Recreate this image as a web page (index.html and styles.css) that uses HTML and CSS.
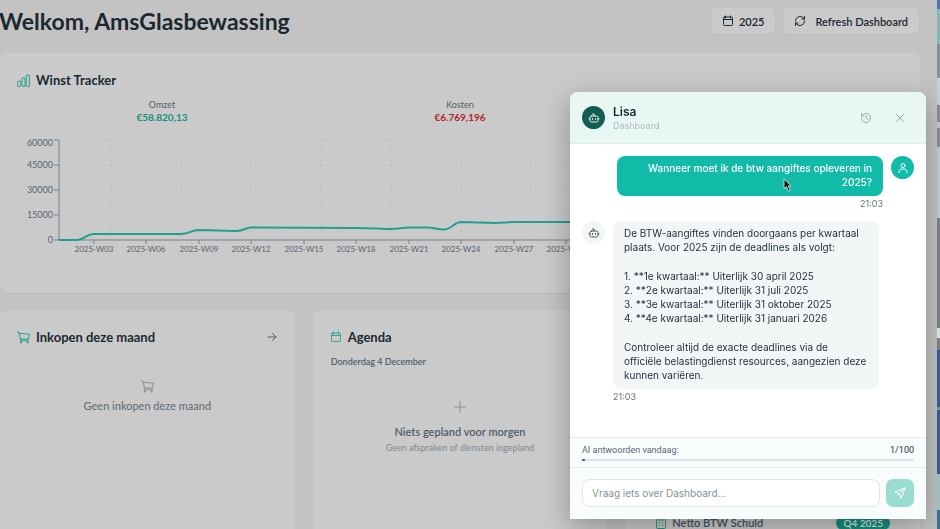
FILE: index.html
```html
<!DOCTYPE html>
<html lang="nl">
<head>
<meta charset="utf-8">
<title>Dashboard</title>
<link rel="stylesheet" href="styles.css">
</head>
<body>
<svg class="sprite" aria-hidden="true">
  <symbol id="calendar" viewBox="0 0 24 24"><path d="M7 2v4M17 2v4M3 9h18M5 4h14a2 2 0 0 1 2 2v13a2 2 0 0 1-2 2H5a2 2 0 0 1-2-2V6a2 2 0 0 1 2-2z"/></symbol>
  <symbol id="refresh" viewBox="0 0 24 24"><path d="M3 12a9 9 0 0 1 15.5-6.3L21 8M21 3v5h-5M21 12a9 9 0 0 1-15.5 6.3L3 16M3 21v-5h5"/></symbol>
  <symbol id="cart" viewBox="0 0 24 24"><path d="M1 2l3 1 3 15h14M4 4l19 2-2 9H6M8 18v3M19 18v3"/><circle cx="7" cy="21" r="1"/><circle cx="20" cy="21" r="1"/></symbol>
  <symbol id="bot" viewBox="0 0 24 24"><path d="M12 8V4H9M2 14h2M20 14h2M9 13v2M15 13v2"/><rect x="4" y="8" width="16" height="12" rx="3"/></symbol>
</svg>
<div class="screen">
  <main class="page">
    <header class="topbar">
      <h1>Welkom, AmsGlasbewassing</h1>
      <div class="actions">
        <button class="btn" type="button"><svg class="icon"><use href="#calendar"/></svg>2025</button>
        <button class="btn btn-wide" type="button"><svg class="icon"><use href="#refresh"/></svg>Refresh Dashboard</button>
      </div>
    </header>

    <section class="card tracker">
      <h2><svg class="icon icon-title" viewBox="0 0 24 24"><rect x="1" y="13" width="6" height="10" rx="3"/><rect x="9" y="7" width="6" height="16" rx="3"/><rect x="17" y="2" width="6" height="21" rx="2"/></svg>Winst Tracker</h2>
      <dl class="stats">
        <div><dt>Omzet</dt><dd class="income">€58.820,13</dd></div>
        <div><dt>Kosten</dt><dd class="costs">€6.769,196</dd></div>
        <div><dt>Winst</dt><dd class="income">€52.050,93</dd></div>
      </dl>
      <svg class="chart" role="img" aria-label="Winst per week">
        <path class="grid" d="M60 6H884M60 31H884M60 56H884M60 81H884M111 6V105M181 6V105M251 6V105M321 6V105M391 6V105M461 6V105M531 6V105"/>
        <path class="axis" d="M54 6H59V106M54 31H59M54 56H59M54 81H59M54 106H884M94 106v4M146 106v4M199 106v4M251 106v4M304 106v4M356 106v4M409 106v4M461 106v4M514 106v4M566 106v4"/>
        <path class="line" d="M59 106H77C84 106 86 100 94 100H181C189 100 191 96 199 96L236 97C243 97 245 94 251 93.500L356 94C370 94 382 95 391 95C398 95 402 93.500 409 93.500H427C434 93.500 437 95.500 444 95.500C452 95.500 454 88 461 88L495 89L513 88H566L600 88.500"/>
        <g class="ylabels"><text x="53" y="12">60000</text><text x="53" y="34">45000</text><text x="53" y="59">30000</text><text x="53" y="84">15000</text><text x="53" y="109">0</text></g>
        <g class="xlabels"><text x="94" y="118">2025-W03</text><text x="146" y="118">2025-W06</text><text x="199" y="118">2025-W09</text><text x="251" y="118">2025-W12</text><text x="304" y="118">2025-W15</text><text x="356" y="118">2025-W18</text><text x="409" y="118">2025-W21</text><text x="461" y="118">2025-W24</text><text x="514" y="118">2025-W27</text><text x="566" y="118">2025-W30</text></g>
      </svg>
    </section>

    <div class="columns">
      <section class="card">
        <h2><svg class="icon icon-title"><use href="#cart"/></svg>Inkopen deze maand
          <a class="more" href="#inkopen" aria-label="Bekijk inkopen"><svg class="icon" viewBox="0 0 24 24"><path d="M4 12h16M13 5l7 7-7 7"/></svg></a></h2>
        <div class="empty">
          <svg class="icon icon-title"><use href="#cart"/></svg>
          <p>Geen inkopen deze maand</p>
        </div>
      </section>
      <section class="card">
        <h2><svg class="icon"><use href="#calendar"/></svg>Agenda</h2>
        <p class="date">Donderdag 4 December</p>
        <div class="empty agenda">
          <svg class="icon" viewBox="0 0 24 24"><path d="M12 1v22M1 12h22"/></svg>
          <p class="strong">Niets gepland voor morgen</p>
          <p class="note">Geen afspraken of diensten ingepland</p>
        </div>
      </section>
      <section class="card taxes">
        <div class="tax-row">
          <svg class="icon" viewBox="0 0 24 24"><rect x="3" y="1" width="18" height="22" rx="2"/><path d="M7 6h10M8 12h1M15 12h1M8 17h1M15 17h1"/></svg>
          <span>Netto BTW Schuld</span><span class="badge">Q4 2025</span>
        </div>
      </section>
    </div>
  </main>
  <div class="edge"></div>
</div>

<aside class="chat" role="dialog" aria-label="Lisa">
  <header class="chat-head">
    <span class="avatar dark"><svg class="icon"><use href="#bot"/></svg></span>
    <div class="who"><h3>Lisa</h3><p>Dashboard</p></div>
    <button class="plain" type="button" aria-label="Geschiedenis"><svg class="icon" viewBox="0 0 24 24"><path d="M3 12a9 9 0 1 0 3-6.700L3 8M3 3v5h5M12 7v5l4 2"/></svg></button>
    <button class="plain" type="button" aria-label="Sluiten"><svg class="icon" viewBox="0 0 24 24"><path d="M5 5l14 14M19 5L5 19"/></svg></button>
  </header>
  <div class="messages">
    <div class="message mine">
      <div class="body">
        <div class="bubble"><p>Wanneer moet ik de btw aangiftes opleveren in 2025?</p></div>
        <time>21:03</time>
      </div>
      <span class="avatar teal"><svg class="icon" viewBox="0 0 24 24"><circle cx="12" cy="7" r="4"/><path d="M4 21v-1c0-4 3-6 6-6h4c3 0 6 2 6 6v1"/></svg></span>
      <svg class="pointer" viewBox="0 0 10 16"><path d="M1 1v11l3-2 2 5 2-1-2-5h3z"/></svg>
    </div>
    <div class="message">
      <span class="avatar pale"><svg class="icon"><use href="#bot"/></svg></span>
      <div class="body">
        <div class="bubble">
          <p>De BTW-aangiftes vinden doorgaans per kwartaal plaats. Voor 2025 zijn de deadlines als volgt:</p>
          <p>1. **1e kwartaal:** Uiterlijk 30 april 2025<br>2. **2e kwartaal:** Uiterlijk 31 juli 2025<br>3. **3e kwartaal:** Uiterlijk 31 oktober 2025<br>4. **4e kwartaal:** Uiterlijk 31 januari 2026</p>
          <p>Controleer altijd de exacte deadlines via de officiële belastingdienst resources, aangezien deze kunnen variëren.</p>
        </div>
        <time>21:03</time>
      </div>
    </div>
  </div>
  <div class="usage">
    <div class="usage-text"><span>AI antwoorden vandaag:</span><span class="count">1/100</span></div>
    <div class="bar"><div class="fill"></div></div>
  </div>
  <form class="composer">
    <input type="text" aria-label="Bericht" placeholder="Vraag iets over Dashboard...">
    <button class="send" type="button" aria-label="Versturen"><svg class="icon" viewBox="0 0 24 24"><path d="M22 2L2 10l8 4 4 8zM22 2L10 14"/></svg></button>
  </form>
</aside>
</body>
</html>
```
FILE: styles.css
```css
* { box-sizing: border-box; margin: 0; padding: 0; }
body { font-family: Lato, sans-serif; color: #1b2831; background: #c3c3c3; overflow: hidden; }
button, input { font: inherit; color: inherit; border: 0; background: none; }
.sprite { display: none; }
.icon { width: 12px; height: 12px; flex: none; fill: none; stroke: currentColor; stroke-width: 2; stroke-linecap: round; stroke-linejoin: round; }
.icon-title { width: 13px; height: 13px; }

.screen { display: flex; height: 100vh; overflow: hidden; }
.page { flex: 1; min-width: 0; padding-right: 17px; background: #c3c3c3; }
.edge { width: 3px; flex: none; background: linear-gradient(#536fb0 0 9px, #82b7b5 9px 44px, #849097 44px 78px, #c4d1d4 78px 105px, #8b9097 105px 122px, #c4cbd0 122px 128px, #8b9097 128px 147px, #c5d0d5 147px 218px, #7f848b 218px 328px, #e3ecec 328px 338px, #7f848b 338px 350px, #405a9e 350px 407px, #65a9a9 407px 410px, #405a9e 410px 474px, #a4cbc9 474px 510px, #35789b 510px); }

.topbar { display: flex; justify-content: space-between; align-items: center; height: 53px; padding-bottom: 11px; }
h1 { font-size: 23px; line-height: 28px; font-weight: 700; text-indent: -1px; white-space: nowrap; }
.actions { display: flex; gap: 6px; }
.btn { display: flex; align-items: center; gap: 5px; height: 28px; padding: 0 11px; border: 1px solid #bdbfbf; border-radius: 6px; background: #cacaca; font-size: 11px; font-weight: 600; white-space: nowrap; }
.btn-wide { gap: 9px; }

.card { background: #cacaca; border-radius: 8px; padding: 18px; min-width: 0; box-shadow: 0 1px 1px #bdbdbd; }
h2 { display: flex; align-items: center; gap: 6px; font-size: 13px; line-height: 18px; font-weight: 700; }
h2 > .icon { color: #32a491; }

.tracker { padding-left: 0; padding-right: 0; height: 240px; }
.tracker h2 { padding-left: 17px; }
.stats { display: grid; grid-template-columns: repeat(3, 1fr); padding: 0 13px; margin-top: 10px; text-align: center; }
.stats dt { font-size: 9px; line-height: 12px; color: #53606b; }
.stats dd { font-size: 10px; line-height: 13px; font-weight: 700; }
.income { color: #14917f; }
.costs { color: #b41f29; }
.chart { display: block; width: 100%; height: 124px; margin-top: 10px; font-family: Lato, sans-serif; }
.chart path { fill: none; }
.grid { stroke: #bcbebf; stroke-dasharray: 2 3; }
.axis { stroke: #74818c; }
.chart .line { stroke: #22a08f; stroke-width: 2; }
.ylabels { font-size: 9px; text-anchor: end; fill: #566370; }
.xlabels { font-size: 8px; text-anchor: middle; fill: #566370; }

.columns { display: grid; grid-template-columns: repeat(3, 1fr); gap: 18px; margin-top: 17px; }
.columns .card { height: 240px; }
.columns .card > h2 { margin: 0 -1px; }
.more { margin-left: auto; color: #52606b; line-height: 0; }
.empty { display: flex; flex-direction: column; align-items: center; margin-top: 34px; text-align: center; color: #8c949a; }
.empty p { margin-top: 6px; font-size: 11px; line-height: 14px; color: #5b6974; }
.date { margin-top: 9px; font-size: 9px; line-height: 14px; font-weight: 600; color: #52606b; }
.agenda { margin-top: 32px; }
.empty .strong { margin-top: 12px; font-weight: 600; color: #4f5d69; }
.empty .note { margin-top: 2px; font-size: 9px; color: #7e8991; }
.taxes { display: flex; flex-direction: column; justify-content: flex-end; }
.taxes.card { padding-bottom: 20px; }
.tax-row { display: flex; align-items: center; gap: 5px; padding: 0 12px; font-size: 11px; font-weight: 600; line-height: 14px; color: #45535e; }
.tax-row .icon { color: #239785; }
.badge { margin-left: auto; padding: 0 7px; border-radius: 7px; background: #168f7e; color: #d6e7e4; font-size: 10px; }

.chat { position: fixed; right: 14px; bottom: 10px; top: 92px; width: 356px; display: flex; flex-direction: column; overflow: hidden; border-radius: 8px 8px 0 0; background: #fff; box-shadow: 0 8px 28px rgba(0, 0, 0, .3); font-family: Inter, sans-serif; }
.chat-head { display: flex; align-items: center; gap: 8px; height: 52px; padding: 0 15px 0 12px; background: #e8f7f3; border-bottom: 1px solid #dceee9; }
.avatar { display: grid; place-items: center; flex: none; width: 23px; height: 23px; border-radius: 50%; }
.dark { background: #135e53; color: #e4f3f0; }
.teal { background: #12bba8; color: #fff; }
.pale { background: #f2f6f7; color: #4c5964; }
.who { flex: 1; padding-top: 2px; }
h3 { font-size: 12px; line-height: 14px; font-weight: 600; }
.who p { margin-top: 1px; font-size: 9px; line-height: 12px; color: #b3b9c0; }
.plain { display: grid; place-items: center; width: 22px; height: 24px; color: #9fa9af; cursor: pointer; }
.plain + .plain { margin-left: 4px; }
.messages { flex: 1; min-height: 0; padding: 12px; display: flex; flex-direction: column; gap: 10px; }
.message { position: relative; display: flex; gap: 8px; }
.mine { justify-content: flex-end; text-align: right; }
.body { width: 80%; }
.bubble { padding: 5px 11px 7px; border-radius: 8px; background: #f2f6f7; color: #25323b; font-size: 10px; line-height: 14px; }
.bubble p + p { margin-top: 15px; }
.mine .bubble { background: #12bba8; color: #fff; font-weight: 500; }
time { display: block; margin-top: 1px; font-size: 9px; line-height: 14px; color: #62707b; }
.pointer { position: absolute; left: 201px; top: 22px; width: 9px; height: 14px; fill: #111; stroke: #ddd; stroke-width: 1; }
.usage { padding: 6px 12px 4px; height: 30px; background: #f8fcfc; border-top: 1px solid #e5ebed; font-family: Roboto, sans-serif; }
.usage-text { display: flex; justify-content: space-between; font-size: 9px; line-height: 13px; color: #596771; }
.count { color: #26333d; }
.bar { height: 2px; margin-top: 2px; border-radius: 1px; background: #dce4e7; }
.fill { width: 1%; height: 2px; background: #2878a8; }
.composer { display: flex; gap: 6px; padding: 11px 12px 12px; background: #f8fcfc; border-top: 1px solid #e5ebed; }
.composer input { flex: 1; min-width: 0; height: 28px; padding: 0 9px; border: 1px solid #e0e6e8; border-radius: 8px; background: #fff; font-size: 10px; }
.composer input::placeholder { color: #84919a; opacity: 1; }
.send { display: grid; place-items: center; width: 28px; height: 28px; border-radius: 7px; background: #98dcd2; color: #fff; }
```
